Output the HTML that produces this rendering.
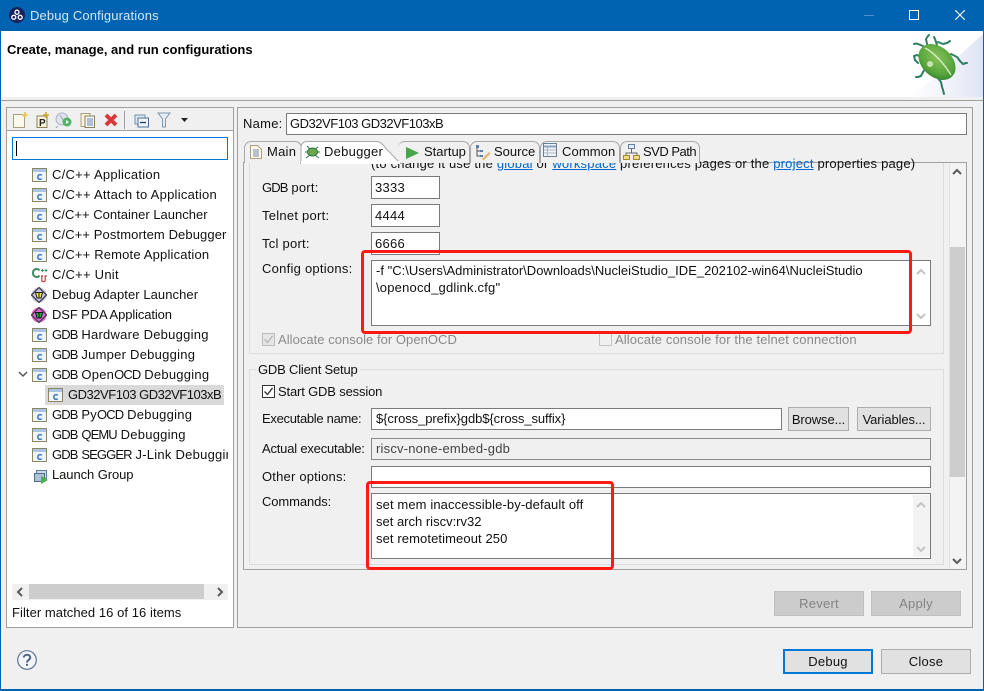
<!DOCTYPE html>
<html><head><meta charset="utf-8"><title>Debug Configurations</title>
<style>
html,body{margin:0;padding:0}
body{width:984px;height:691px;overflow:hidden;position:relative;background:#f0f0f0;font-family:"Liberation Sans",sans-serif;font-size:13px;color:#111;letter-spacing:.25px}
div,span.a,svg.a{position:absolute;box-sizing:border-box}
.t{white-space:nowrap;line-height:16px;height:16px}
.in{background:#fff;border:1px solid #7a7a7a}
.btn{background:#e1e1e1;border:1px solid #adadad;text-align:center;line-height:23px;white-space:nowrap}
.dis{background:#ccc;border:1px solid #bfbfbf;color:#838383}
.g{color:#8a8a8a}
.tab{border:1px solid #a8a8a8;border-bottom:none;border-radius:7px 7px 0 0;background:#f0f0f0}
.red{border:3px solid #ff1a12;border-radius:4px}
.c{letter-spacing:-.9px}
a{color:#0066cc;text-decoration:underline}
</style></head><body>
<svg width="0" height="0" style="position:absolute"><defs>
<symbol id="c" viewBox="0 0 16 16"><rect x=".5" y="1.500" width="14" height="13" fill="#eef4fa" stroke="#8f8560"/><rect x="1" y="2" width="13" height="3" fill="#a9c5e2"/><path d="M9.800 8.300C8.800 7.300 5.800 7.400 5.800 10s3 2.700 4 1.700" fill="none" stroke="#2f6ba8" stroke-width="1.300"/></symbol>
<symbol id="chev" viewBox="0 0 10 10"><path d="M1 7l4-4 4 4" fill="none" stroke="#c4c4c4" stroke-width="2"/></symbol>
</defs></svg>

<!-- window -->
<div style="left:0;top:0;width:984px;height:691px;border:1px solid #0063b1;border-width:0 1px 2px 1px"></div>
<div style="left:0;top:0;width:984px;height:31px;background:#0063b1"></div>
<svg class="a" style="left:9px;top:7px" width="16" height="16" viewBox="0 0 16 16"><circle cx="8" cy="8" r="8" fill="#16235c"/><g fill="none" stroke="#fff" stroke-width="1.300"><circle cx="8" cy="5.200" r="2"/><circle cx="4.800" cy="10.300" r="2"/><circle cx="11.200" cy="10.300" r="2"/></g></svg>
<div class="t" style="left:30px;top:8px;color:#d5e6f5;letter-spacing:.15px">Debug Configurations</div>
<div style="left:864px;top:15px;width:10px;height:1px;background:#4a8fcf"></div>
<div style="left:909px;top:10px;width:10px;height:10px;border:1px solid #fff"></div>
<svg class="a" style="left:955px;top:10px" width="10" height="10" viewBox="0 0 10 10"><path d="M0 0l10 10M10 0L0 10" stroke="#fff" stroke-width="1.100"/></svg>

<!-- header -->
<div style="left:1px;top:31px;width:982px;height:66px;background:#fff"></div>
<div style="left:1px;top:97px;width:982px;height:3px;background:#f0f0f0"></div>
<div style="left:1px;top:100px;width:982px;height:1px;background:#a0a0a0"></div>
<div class="t" style="left:7px;top:42px;font-weight:bold;color:#000;letter-spacing:0">Create, manage, and run configurations</div>
<svg class="a" style="left:900px;top:31px" width="83" height="66" viewBox="0 0 83 66">
<defs><linearGradient id="bgw" x1="0" y1="0" x2="1" y2="0"><stop offset="0" stop-color="#fff"/><stop offset=".55" stop-color="#f1f2fa"/><stop offset="1" stop-color="#dfe3f3"/></linearGradient>
<radialGradient id="bug" cx=".42" cy=".4" r=".7"><stop offset="0" stop-color="#86c25a"/><stop offset=".65" stop-color="#58a53c"/><stop offset="1" stop-color="#2b7f33"/></radialGradient></defs>
<path d="M8 66C30 52 62 22 83 3V66Z" fill="url(#bgw)"/>
<g fill="none" stroke="#2f7f62" stroke-width="2" stroke-linecap="round" stroke-linejoin="round">
<path d="M23 15l-5-2-2-.5-2 .5"/><path d="M27 13l-1-5 2-3 1-1"/><path d="M37 14l-2-6-1-2M38 11l5 2 4-1 3-2"/>
<path d="M51 23l6 3 3 4 3 3 3-1 1 0"/><path d="M21 26l-4-2-3 1 1 4 3 3"/><path d="M25 38l-2 3-2 4-3 1-2 0"/><path d="M37 46l4 5 1 5 1 3 1 4"/></g>
<ellipse cx="37" cy="31" rx="21" ry="15" transform="rotate(42 37 31)" fill="url(#bug)"/>
<path d="M25 17c8 4 18 14 26 27" fill="none" stroke="#d8efc6" stroke-width="1.300"/>
<circle cx="30" cy="33" r="3" fill="#c8e6b4"/>
</svg>

<!-- left panel -->
<div style="left:6px;top:107px;width:228px;height:521px;background:#fff;border:1px solid #a0a0a0"></div>
<div style="left:7px;top:108px;width:226px;height:23px;background:#f0f0f0;border-bottom:1px solid #a0a0a0"></div>
<!-- toolbar icons -->
<svg class="a" style="left:12px;top:111px" width="180" height="18" viewBox="0 0 180 18">
<path d="M1.500 3.500h9l2 2v11h-11z" fill="#fbf8ec" stroke="#a79f80"/><path d="M13 1v6M10 4h6" stroke="#e8c34f" stroke-width="1.600"/>
<rect x="25" y="5" width="10" height="11.500" fill="#f6f2dc" stroke="#8c8058"/><text x="27" y="15" font-family="Liberation Sans" font-size="10" font-weight="bold" fill="#222" letter-spacing="0">P</text><path d="M34 1v6M31 4h6" stroke="#d6a82a" stroke-width="1.600"/>
<circle cx="50" cy="8" r="6" fill="#dfe3ea" stroke="#a8b0c0"/><path d="M46 15l-2 2M48 4l5 8" stroke="#9aa4b8"/><circle cx="55" cy="11" r="4.500" fill="#55b26b"/><path d="M54 9l3 2-3 2z" fill="#fff"/>
<path d="M69 2.500h9l0 13h-9z" fill="#f7f2dc" stroke="#a79f80"/><rect x="73" y="5" width="9.500" height="11.500" fill="#f4f4fa" stroke="#8c8058"/><path d="M75 8h6M75 10h6M75 12h6M75 14h6" stroke="#6f87ab"/>
<path d="M94 4l10 10M104 4l-10 10" stroke="#d83a3a" stroke-width="4"/>
<rect x="112" y="0" width="1" height="18" fill="#a0a0a0"/>
<rect x="123" y="4" width="10" height="9" fill="#dfe8f2" stroke="#6f8fb0"/><rect x="126" y="7" width="10.500" height="9" fill="#eef3f8" stroke="#4b7096"/><path d="M128 11.500h6" stroke="#1d3f66" stroke-width="1.300"/>
<path d="M146 2h12l-4.500 6v8h-3V8z" fill="#e4edf4" stroke="#7e97ad"/>
<path d="M169 7h7l-3.500 4z" fill="#222"/>
</svg>
<div style="left:12px;top:137px;width:216px;height:23px;background:#fff;border:1px solid #0078d7"></div>
<div style="left:16px;top:141px;width:1px;height:15px;background:#000"></div>

<!-- tree -->
<svg class="a" style="left:32px;top:167px" width="16" height="16"><use href="#c"/></svg><div class="t" style="left:52px;top:167px">C/C++ Application</div>
<svg class="a" style="left:32px;top:187px" width="16" height="16"><use href="#c"/></svg><div class="t" style="left:52px;top:187px">C/C++ Attach to Application</div>
<svg class="a" style="left:32px;top:207px" width="16" height="16"><use href="#c"/></svg><div class="t" style="left:52px;top:207px;letter-spacing:.01px">C/C++ Container Launcher</div>
<svg class="a" style="left:32px;top:227px" width="16" height="16"><use href="#c"/></svg><div class="t" style="left:52px;top:227px;width:177px;overflow:hidden;letter-spacing:.1px">C/C++ Postmortem Debugger</div>
<svg class="a" style="left:32px;top:247px" width="16" height="16"><use href="#c"/></svg><div class="t" style="left:52px;top:247px;letter-spacing:.17px">C/C++ Remote Application</div>
<svg class="a" style="left:32px;top:267px" width="16" height="16" viewBox="0 0 16 16"><path d="M7.500 3.500C6 1 1 1.500 1 6s5 5 6.500 2.500" fill="none" stroke="#3f8f5f" stroke-width="2"/><path d="M9 3.500h3M10.500 2v3M12.500 3.500h3M14 2v3" stroke="#3f8f5f" stroke-width="1"/><path d="M9 9h2M9.800 9v4.500c0 1.500 3.400 1.500 3.400 0V9M12.500 9H15" fill="none" stroke="#b8443f" stroke-width="1.200"/></svg><div class="t" style="left:52px;top:267px">C/C++ Unit</div>
<svg class="a" style="left:31px;top:287px" width="16" height="16" viewBox="0 0 16 16"><circle cx="8" cy="8" r="7.500" fill="#c9c4f0"/><path d="M8 .5L15.500 8 8 15.500.5 8z" fill="none" stroke="#444" stroke-width="1.400"/><path d="M4.500 5.500h7L10 11H6z" fill="#ece24a" stroke="#222"/><path d="M8 5.500V11" stroke="#222"/></svg><div class="t" style="left:52px;top:287px;letter-spacing:.07px">Debug Adapter Launcher</div>
<svg class="a" style="left:31px;top:307px" width="16" height="16" viewBox="0 0 16 16"><circle cx="8" cy="8" r="7.500" fill="#ee5fdc"/><path d="M8 .5L15.500 8 8 15.500.5 8z" fill="none" stroke="#444" stroke-width="1.400"/><path d="M4.500 5.500h7L10 11H6z" fill="#23b04a" stroke="#111"/><path d="M8 5.500V11" stroke="#111"/></svg><div class="t" style="left:52px;top:307px;letter-spacing:-.12px">DSF PDA Application</div>
<svg class="a" style="left:32px;top:327px" width="16" height="16"><use href="#c"/></svg><div class="t" style="left:52px;top:327px"><span class="c">GDB</span> Hardware Debugging</div>
<svg class="a" style="left:32px;top:347px" width="16" height="16"><use href="#c"/></svg><div class="t" style="left:52px;top:347px"><span class="c">GDB</span> Jumper Debugging</div>
<svg class="a" style="left:18px;top:371px" width="10" height="7" viewBox="0 0 10 7"><path d="M1 1l4 4 4-4" fill="none" stroke="#555" stroke-width="1.500"/></svg>
<svg class="a" style="left:32px;top:367px" width="16" height="16"><use href="#c"/></svg><div class="t" style="left:52px;top:367px"><span class="c">GDB</span> Open<span class="c">OCD</span> Debugging</div>
<div style="left:45px;top:385px;width:179px;height:20px;background:#d9d9d9"></div>
<svg class="a" style="left:48px;top:387px" width="16" height="16"><use href="#c"/></svg><div class="t" style="left:68px;top:387px;letter-spacing:-.48px">GD32VF103 GD32VF103xB</div>
<svg class="a" style="left:32px;top:407px" width="16" height="16"><use href="#c"/></svg><div class="t" style="left:52px;top:407px"><span class="c">GDB</span> Py<span class="c">OCD</span> Debugging</div>
<svg class="a" style="left:32px;top:427px" width="16" height="16"><use href="#c"/></svg><div class="t" style="left:52px;top:427px"><span class="c">GDB</span> <span class="c">QEMU</span> Debugging</div>
<svg class="a" style="left:32px;top:447px" width="16" height="16"><use href="#c"/></svg><div class="t" style="left:52px;top:447px;width:176px;overflow:hidden"><span class="c">GDB</span> <span class="c">SEGGER</span> J-Link Debugging</div>
<svg class="a" style="left:33px;top:468px" width="16" height="16" viewBox="0 0 16 16"><rect x="3.500" y="2.500" width="10" height="8" fill="#cfdce8" stroke="#5a7f9a"/><rect x="1.500" y="5.500" width="10" height="8" fill="#a9c3d6" stroke="#4a6f8a"/><path d="M8 8l7 4-7 4z" fill="#4fae4f"/></svg><div class="t" style="left:52px;top:467px;letter-spacing:-.08px">Launch Group</div>

<div style="left:12px;top:584px;width:216px;height:16px;background:#f0f0f0"></div>
<div style="left:29px;top:584px;width:175px;height:15px;background:#cdcdcd"></div>
<svg class="a" style="left:16px;top:587px" width="8" height="10" viewBox="0 0 8 10"><path d="M6 1L2 5l4 4" fill="none" stroke="#5a5a5a" stroke-width="2"/></svg>
<svg class="a" style="left:216px;top:587px" width="8" height="10" viewBox="0 0 8 10"><path d="M2 1l4 4-4 4" fill="none" stroke="#5a5a5a" stroke-width="2"/></svg>
<div class="t" style="left:12px;top:605px;letter-spacing:.06px">Filter matched 16 of 16 items</div>

<!-- right panel -->
<div style="left:237px;top:107px;width:736px;height:521px;border:1px solid #a0a0a0;background:#f0f0f0"></div>
<div class="t" style="left:243px;top:116px">Name:</div>
<div class="in" style="left:286px;top:113px;width:681px;height:22px"></div>
<div class="t" style="left:290px;top:116px;letter-spacing:-.48px">GD32VF103 GD32VF103xB</div>

<!-- tab content -->
<div style="left:243px;top:162px;width:724px;height:408px;border:1px solid #a0a0a0;background:#f0f0f0;overflow:hidden"></div>
<div class="t" style="left:371px;top:156px;letter-spacing:.2px">(to change it use the <a>global</a> or <a>workspace</a> preferences pages or the <a>project</a> properties page)</div>

<!-- tabs -->
<div class="tab" style="left:244px;top:141px;width:58px;height:22px"></div>
<div class="tab" style="left:398px;top:141px;width:72px;height:22px;border-left:none"></div>
<div class="tab" style="left:470px;top:141px;width:70px;height:22px"></div>
<div class="tab" style="left:540px;top:141px;width:80px;height:22px"></div>
<div class="tab" style="left:620px;top:141px;width:80px;height:22px"></div>
<svg class="a" style="left:300px;top:141px" width="102" height="23" viewBox="0 0 102 23"><path d="M1 23V8C1 3 3 .5 7 .5H76c5 0 7 3 10 7L101 23z" fill="#fff" stroke="#a8a8a8"/><path d="M0 22.500h1M101 22.500h1" stroke="#a8a8a8"/></svg>
<div style="left:301px;top:161px;width:99px;height:3px;background:#fff"></div>
<div class="t" style="left:267px;top:144px">Main</div>
<div class="t" style="left:324px;top:144px">Debugger</div>
<div class="t" style="left:424px;top:144px;letter-spacing:0">Startup</div>
<div class="t" style="left:494px;top:144px;letter-spacing:0">Source</div>
<div class="t" style="left:562px;top:144px;letter-spacing:.1px">Common</div>
<div class="t" style="left:643px;top:144px;letter-spacing:-.5px">SVD Path</div>
<svg class="a" style="left:249px;top:144px" width="14" height="16" viewBox="0 0 14 16"><path d="M1.500 1.500h7l4 4v9h-11z" fill="#fbf8ea" stroke="#a79f80"/><path d="M4 6h6M4 8h6M4 10h6M4 12h6" stroke="#6f87ab"/></svg>
<svg class="a" style="left:304px;top:144px" width="17" height="16" viewBox="0 0 17 16"><g stroke="#2f6f4f" fill="none"><path d="M3 2l4 4M14 3l-4 3M1 8h4M12 8h4M2 14l4-3M15 14l-4-3"/></g><ellipse cx="8.500" cy="8" rx="5" ry="4" fill="#6aa84a" stroke="#2f6f3f"/></svg>
<svg class="a" style="left:405px;top:146px" width="15" height="14" viewBox="0 0 15 14"><path d="M1 1l13 6-13 6z" fill="#47a447"/></svg>
<svg class="a" style="left:475px;top:144px" width="16" height="17" viewBox="0 0 16 17"><path d="M2 3v9h3M2 7h3" fill="none" stroke="#555"/><rect x="1" y="1" width="3" height="3" fill="#5d7fae"/><rect x="5" y="6" width="3" height="2" fill="#5d7fae"/><rect x="5" y="11" width="3" height="2" fill="#5d7fae"/><path d="M7 15l7-7 1.500 1.500-7 7z" fill="#e2b36b"/></svg>
<svg class="a" style="left:543px;top:143px" width="15" height="15" viewBox="0 0 15 15"><rect x=".5" y=".5" width="13" height="13" fill="#f2f4f8" stroke="#6c8096"/><path d="M1 3.500h12" stroke="#8ba2bd" stroke-width="2"/><path d="M4.500 4v9M1 7h12M1 10h12" stroke="#a9b7c6"/></svg>
<svg class="a" style="left:623px;top:144px" width="17" height="16" viewBox="0 0 17 16"><rect x="5.500" y=".5" width="6" height="4" fill="#e9eef6" stroke="#5d7fae"/><path d="M8.500 5v4M3 12V9h11v3" fill="none" stroke="#666"/><rect x=".5" y="11.500" width="6" height="4" fill="#f0d98a" stroke="#a8862a"/><rect x="10.500" y="11.500" width="6" height="4" fill="#f0d98a" stroke="#a8862a"/></svg>

<!-- top group -->
<div style="left:249px;top:163px;width:695px;height:191px;border:1px solid #dcdcdc;border-top:none"></div>
<div class="t" style="left:262px;top:180px"><span class="c">GDB</span> port:</div>
<div class="in" style="left:371px;top:176px;width:69px;height:23px"></div>
<div class="t" style="left:375px;top:180px">3333</div>
<div class="t" style="left:262px;top:208px">Telnet port:</div>
<div class="in" style="left:371px;top:204px;width:69px;height:23px"></div>
<div class="t" style="left:375px;top:208px">4444</div>
<div class="t" style="left:262px;top:236px">Tcl port:</div>
<div class="in" style="left:371px;top:232px;width:69px;height:23px"></div>
<div class="t" style="left:375px;top:236px">6666</div>
<div class="t" style="left:262px;top:261px">Config options:</div>
<div class="in" style="left:371px;top:260px;width:560px;height:66px"></div>
<div class="t" style="left:376px;top:263px;letter-spacing:.01px">-f "C:\Users\Administrator\Downloads\NucleiStudio_IDE_202102-win64\NucleiStudio</div>
<div class="t" style="left:376px;top:280px;letter-spacing:.2px">\openocd_gdlink.cfg"</div>
<svg class="a" style="left:916px;top:267px" width="10" height="10"><use href="#chev"/></svg>
<svg class="a" style="left:916px;top:311px;transform:scaleY(-1)" width="10" height="10"><use href="#chev"/></svg>
<div style="left:262px;top:333px;width:13px;height:13px;background:#e6e6e6;border:1px solid #bcbcbc"></div>
<svg class="a" style="left:263px;top:334px" width="11" height="11" viewBox="0 0 11 11"><path d="M1.500 5.500l3 3 5-6.500" fill="none" stroke="#b5b5b5" stroke-width="1.400"/></svg>
<div class="t g" style="left:278px;top:332px;letter-spacing:.04px">Allocate console for OpenOCD</div>
<div style="left:599px;top:333px;width:13px;height:13px;background:#f0f0f0;border:1px solid #c4c4c4"></div>
<div class="t g" style="left:615px;top:332px;letter-spacing:.11px">Allocate console for the telnet connection</div>

<!-- GDB client group -->
<div style="left:249px;top:369px;width:695px;height:196px;border:1px solid #dcdcdc"></div>
<div class="t" style="left:256px;top:362px;background:#f0f0f0;padding:0 2px;letter-spacing:-.19px">GDB Client Setup</div>
<div style="left:262px;top:385px;width:13px;height:13px;background:#fff;border:1px solid #333"></div>
<svg class="a" style="left:263px;top:386px" width="11" height="11" viewBox="0 0 11 11"><path d="M1.500 5.500l3 3 5-6.500" fill="none" stroke="#333" stroke-width="1.400"/></svg>
<div class="t" style="left:278px;top:384px;letter-spacing:-.16px">Start GDB session</div>
<div class="t" style="left:262px;top:411px;letter-spacing:-.3px">Executable name:</div>
<div class="in" style="left:371px;top:408px;width:411px;height:22px"></div>
<div class="t" style="left:376px;top:411px;letter-spacing:-.08px">${cross_prefix}gdb${cross_suffix}</div>
<div class="btn" style="left:788px;top:407px;width:61px;height:24px;letter-spacing:-.1px">Browse...</div>
<div class="btn" style="left:857px;top:407px;width:74px;height:24px;letter-spacing:-.1px">Variables...</div>
<div class="t" style="left:262px;top:441px;letter-spacing:-.2px">Actual executable:</div>
<div style="left:371px;top:438px;width:560px;height:22px;background:#f0f0f0;border:1px solid #8a8a8a"></div>
<div class="t" style="left:376px;top:441px;color:#444;letter-spacing:.2px">riscv-none-embed-gdb</div>
<div class="t" style="left:262px;top:469px;letter-spacing:.2px">Other options:</div>
<div class="in" style="left:371px;top:466px;width:560px;height:22px"></div>
<div class="t" style="left:262px;top:494px;letter-spacing:-.1px">Commands:</div>
<div class="in" style="left:371px;top:493px;width:560px;height:66px"></div>
<div class="t" style="left:376px;top:497px;letter-spacing:.11px">set mem inaccessible-by-default off</div>
<div class="t" style="left:376px;top:514px;letter-spacing:0">set arch riscv:rv32</div>
<div class="t" style="left:376px;top:531px;letter-spacing:.1px">set remotetimeout 250</div>
<div style="left:913px;top:495px;width:17px;height:62px;background:#f3f3f3"></div>
<svg class="a" style="left:916px;top:500px" width="10" height="10"><use href="#chev"/></svg>
<svg class="a" style="left:916px;top:544px;transform:scaleY(-1)" width="10" height="10"><use href="#chev"/></svg>

<!-- vertical scrollbar -->
<div style="left:949px;top:163px;width:17px;height:406px;background:#f3f3f3;border-left:1px solid #e2e2e2"></div>
<div style="left:950px;top:247px;width:15px;height:230px;background:#cdcdcd"></div>
<svg class="a" style="left:952px;top:167px" width="10" height="10" viewBox="0 0 10 10"><path d="M1 7l4-4 4 4" fill="none" stroke="#5a5a5a" stroke-width="2"/></svg>
<svg class="a" style="left:952px;top:556px" width="10" height="10" viewBox="0 0 10 10"><path d="M1 3l4 4 4-4" fill="none" stroke="#5a5a5a" stroke-width="2"/></svg>

<!-- red annotations -->
<div class="red" style="left:361px;top:250px;width:551px;height:84px"></div>
<div class="red" style="left:366px;top:481px;width:248px;height:89px"></div>

<!-- buttons -->
<div class="btn dis" style="left:774px;top:591px;width:90px;height:25px">Revert</div>
<div class="btn dis" style="left:871px;top:591px;width:90px;height:25px">Apply</div>
<svg class="a" style="left:17px;top:650px" width="20" height="20" viewBox="0 0 20 20"><circle cx="10" cy="10" r="9.300" fill="#f4f5f8" stroke="#5f7391" stroke-width="1.200"/><path d="M6.800 7.500C7 3.800 13.200 3.800 13.200 7.500c0 2.500-3.200 2.500-3.200 5" fill="none" stroke="#4f6483" stroke-width="2"/><rect x="9" y="13.800" width="2" height="2" fill="#4f6483"/></svg>
<div class="btn" style="left:783px;top:649px;width:90px;height:25px;border:2px solid #0078d7;line-height:21px">Debug</div>
<div class="btn" style="left:881px;top:649px;width:90px;height:25px">Close</div>
</body></html>
